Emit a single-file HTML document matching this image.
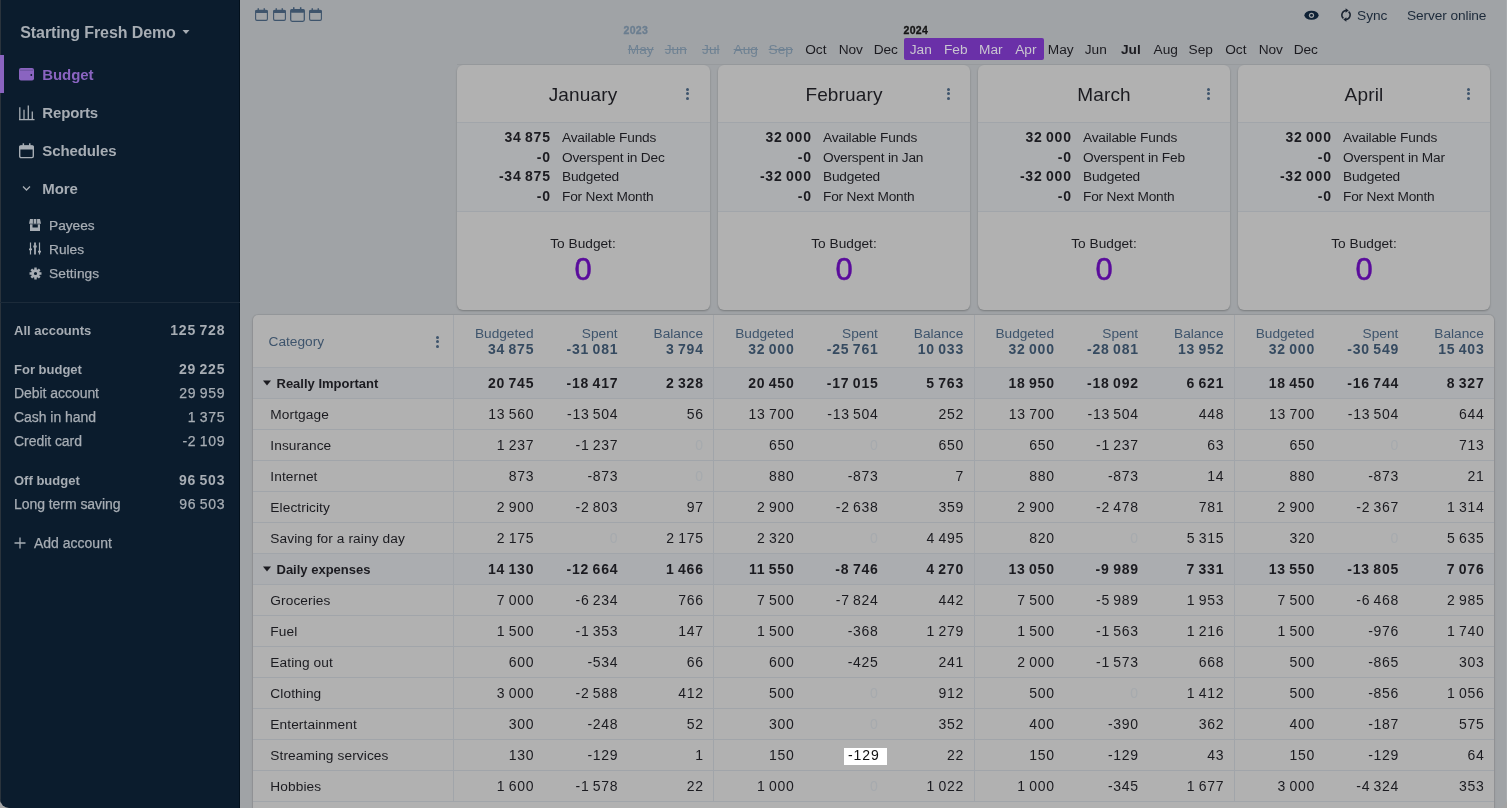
<!DOCTYPE html>
<html><head><meta charset="utf-8"><style>
html,body{margin:0;padding:0;width:1507px;height:808px;overflow:hidden;background:#a3a3a3}
body{position:relative;font-family:"Liberation Sans",sans-serif}
.t{position:absolute;line-height:0;white-space:nowrap}
.b{position:absolute}
#win{position:absolute;left:0;top:0;width:1507px;height:808px;overflow:hidden;border-radius:0 0 9px 9px;will-change:transform}
</style></head><body><div id="win">
<div class="b" style="left:0px;top:0px;width:240px;height:808px;background:#0b1c2d;"></div>
<div class="b" style="left:0px;top:0px;width:1px;height:808px;background:#2a333c;"></div>
<div class="b" style="left:239px;top:0px;width:1px;height:808px;background:#02101c;"></div>
<div class="t" style="top:33px;font-size:16px;color:#a7adb4;font-weight:700;letter-spacing:-0.1px;left:20.3px;">Starting Fresh Demo</div>
<svg class="b" style="left:182px;top:29px" width="8" height="6" viewBox="0 0 8 6"><path d="M0.5 1 L7.5 1 L4 5 Z" fill="#a7adb4"/></svg>
<div class="b" style="left:0px;top:55px;width:4px;height:38px;background:#8a64c0;"></div>
<svg class="b" style="left:19px;top:68px" width="15" height="13" viewBox="0 0 15 13"><rect x="0" y="0" width="15" height="12.6" rx="2" fill="#8a64c0"/><path d="M0.8 2.2 H14.2" stroke="#0b1c2d" stroke-width="0.5" opacity="0.5"/><circle cx="12.3" cy="7" r="0.9" fill="#0b1c2d"/></svg>
<div class="t" style="top:74.5px;font-size:15px;color:#8a64c0;font-weight:700;letter-spacing:-0.1px;left:42.3px;">Budget</div>
<svg class="b" style="left:19px;top:104px" width="16" height="17" viewBox="0 0 16 17" fill="none" stroke="#a7adb4" stroke-width="1.3"><path d="M0 15.6 H15.5"/><path d="M0.8 15.6 V3.2"/><path d="M5 15.6 V5.7"/><path d="M9.3 15.6 V1.4"/><path d="M13.3 15.6 V7.6"/></svg>
<div class="t" style="top:113px;font-size:15px;color:#a7adb4;font-weight:700;letter-spacing:-0.15px;left:42.3px;">Reports</div>
<svg class="b" style="left:19px;top:142.5px" width="15" height="16" viewBox="0 0 15 16"><rect x="0.7" y="2.9" width="13.6" height="11.7" rx="1.4" fill="none" stroke="#a7adb4" stroke-width="1.4"/><rect x="0.3" y="2.4" width="14.4" height="4.2" rx="1.2" fill="#a7adb4"/><rect x="3.6" y="0.3" width="1.5" height="3.5" fill="#a7adb4"/><rect x="10" y="0.3" width="1.5" height="3.5" fill="#a7adb4"/></svg>
<div class="t" style="top:151px;font-size:15px;color:#a7adb4;font-weight:700;letter-spacing:-0.1px;left:42.3px;">Schedules</div>
<svg class="b" style="left:22px;top:185px" width="9" height="7" viewBox="0 0 9 7" fill="none" stroke="#a7adb4" stroke-width="1.3"><path d="M1 1.5 L4.5 5 L8 1.5"/></svg>
<div class="t" style="top:189px;font-size:15px;color:#a7adb4;font-weight:700;letter-spacing:-0.1px;left:42.3px;">More</div>
<svg class="b" style="left:29px;top:219px" width="12" height="12" viewBox="0 0 12 12"><path d="M1 0 H11 L12 4.8 H0 Z" fill="#a7adb4"/><path d="M4.4 0 V4.8 M7.6 0 V4.8" stroke="#0b1c2d" stroke-width="0.7"/><rect x="1" y="5.3" width="10" height="6.7" fill="#a7adb4"/><rect x="3.5" y="5.3" width="5.3" height="3.2" fill="#0b1c2d"/></svg>
<div class="t" style="top:226px;font-size:13.7px;color:#a7adb4;left:49px;-webkit-text-stroke:0.25px #a7adb4;">Payees</div>
<svg class="b" style="left:29px;top:242px" width="12" height="13" viewBox="0 0 12 13" fill="none" stroke="#a7adb4"><path d="M1.5 0.5 V12.5 M10.5 0.5 V12.5" stroke-width="1.2"/><path d="M6 0.5 V12.5" stroke-width="1.8"/><path d="M0 7.3 H3 M4.3 4.5 H7.7 M9 9.6 H12" stroke-width="1.8"/></svg>
<div class="t" style="top:250px;font-size:13.7px;color:#a7adb4;left:49px;-webkit-text-stroke:0.25px #a7adb4;">Rules</div>
<svg class="b" style="left:28.5px;top:266.6px" width="13" height="13" viewBox="0 0 13 13"><path fill="#a7adb4" fill-rule="evenodd" d="M4.85 2.53 L5.23 2.39 L5.29 0.52 L7.71 0.52 L7.77 2.39 L8.15 2.53 L8.51 2.70 L9.87 1.42 L11.58 3.13 L10.30 4.49 L10.47 4.85 L10.61 5.23 L12.48 5.29 L12.48 7.71 L10.61 7.77 L10.47 8.15 L10.30 8.51 L11.58 9.87 L9.87 11.58 L8.51 10.30 L8.15 10.47 L7.77 10.61 L7.71 12.48 L5.29 12.48 L5.23 10.61 L4.85 10.47 L4.49 10.30 L3.13 11.58 L1.42 9.87 L2.70 8.51 L2.53 8.15 L2.39 7.77 L0.52 7.71 L0.52 5.29 L2.39 5.23 L2.53 4.85 L2.70 4.49 L1.42 3.13 L3.13 1.42 L4.49 2.70 Z M6.5 4.9 A1.6 1.6 0 1 0 6.5 8.1 A1.6 1.6 0 1 0 6.5 4.9 Z"/></svg>
<div class="t" style="top:274px;font-size:13.7px;color:#a7adb4;letter-spacing:0.1px;left:49px;-webkit-text-stroke:0.25px #a7adb4;">Settings</div>
<div class="b" style="left:0px;top:302px;width:240px;height:1px;background:#1c2b3a;"></div>
<div class="t" style="top:331px;font-size:13px;color:#a7adb4;font-weight:700;left:14px;">All accounts</div>
<div class="t" style="top:330px;font-size:14px;color:#a7adb4;font-weight:700;letter-spacing:0.8px;left:-375.5px;width:600px;text-align:right;margin-left:0.8px;word-spacing:-1.2px;">125 728</div>
<div class="t" style="top:370px;font-size:13px;color:#a7adb4;font-weight:700;left:14px;">For budget</div>
<div class="t" style="top:369px;font-size:14px;color:#a7adb4;font-weight:700;letter-spacing:0.8px;left:-375.5px;width:600px;text-align:right;margin-left:0.8px;word-spacing:-1.2px;">29 225</div>
<div class="t" style="top:393px;font-size:14px;color:#a7adb4;letter-spacing:-0.05px;left:14px;-webkit-text-stroke:0.25px #a7adb4;">Debit account</div>
<div class="t" style="top:393px;font-size:14px;color:#a7adb4;letter-spacing:0.7px;left:-375.5px;width:600px;text-align:right;margin-left:0.7px;word-spacing:-1.2px;-webkit-text-stroke:0.25px #a7adb4;">29 959</div>
<div class="t" style="top:417px;font-size:14px;color:#a7adb4;letter-spacing:-0.05px;left:14px;-webkit-text-stroke:0.25px #a7adb4;">Cash in hand</div>
<div class="t" style="top:417px;font-size:14px;color:#a7adb4;letter-spacing:0.7px;left:-375.5px;width:600px;text-align:right;margin-left:0.7px;word-spacing:-1.2px;-webkit-text-stroke:0.25px #a7adb4;">1 375</div>
<div class="t" style="top:441px;font-size:14px;color:#a7adb4;letter-spacing:-0.05px;left:14px;-webkit-text-stroke:0.25px #a7adb4;">Credit card</div>
<div class="t" style="top:441px;font-size:14px;color:#a7adb4;letter-spacing:0.7px;left:-375.5px;width:600px;text-align:right;margin-left:0.7px;word-spacing:-1.2px;-webkit-text-stroke:0.25px #a7adb4;">-2 109</div>
<div class="t" style="top:481px;font-size:13px;color:#a7adb4;font-weight:700;left:14px;">Off budget</div>
<div class="t" style="top:480px;font-size:14px;color:#a7adb4;font-weight:700;letter-spacing:0.8px;left:-375.5px;width:600px;text-align:right;margin-left:0.8px;word-spacing:-1.2px;">96 503</div>
<div class="t" style="top:504px;font-size:14px;color:#a7adb4;letter-spacing:-0.05px;left:14px;-webkit-text-stroke:0.25px #a7adb4;">Long term saving</div>
<div class="t" style="top:504px;font-size:14px;color:#a7adb4;letter-spacing:0.7px;left:-375.5px;width:600px;text-align:right;margin-left:0.7px;word-spacing:-1.2px;-webkit-text-stroke:0.25px #a7adb4;">96 503</div>
<svg class="b" style="left:14px;top:537px" width="12" height="12" viewBox="0 0 12 12" fill="none" stroke="#a7adb4" stroke-width="1.3"><path d="M6 0.5 V11.5 M0.5 6 H11.5"/></svg>
<div class="t" style="top:543px;font-size:14px;color:#a7adb4;left:34px;-webkit-text-stroke:0.25px #a7adb4;">Add account</div>
<div class="b" style="left:240px;top:0px;width:1267px;height:808px;background:#a0a3a6;"></div>
<svg class="b" style="left:255px;top:8px" width="13" height="13" viewBox="0 0 13 13" preserveAspectRatio="none"><rect x="0.6" y="2.3" width="11.8" height="10.1" rx="1.3" fill="none" stroke="#3e546c" stroke-width="1.1"/><rect x="0.4" y="2" width="12.2" height="2.9" rx="1" fill="#3e546c"/><rect x="2.6" y="0.2" width="1.3" height="3" fill="#3e546c"/><rect x="8.6" y="0.2" width="1.3" height="3" fill="#3e546c"/></svg>
<svg class="b" style="left:273px;top:8px" width="13" height="13" viewBox="0 0 13 13" preserveAspectRatio="none"><rect x="0.6" y="2.3" width="11.8" height="10.1" rx="1.3" fill="none" stroke="#3e546c" stroke-width="1.1"/><rect x="0.4" y="2" width="12.2" height="2.9" rx="1" fill="#3e546c"/><rect x="2.6" y="0.2" width="1.3" height="3" fill="#3e546c"/><rect x="8.6" y="0.2" width="1.3" height="3" fill="#3e546c"/></svg>
<svg class="b" style="left:290px;top:7px" width="15" height="15" viewBox="0 0 13 13" preserveAspectRatio="none"><rect x="0.6" y="2.3" width="11.8" height="10.1" rx="1.3" fill="none" stroke="#3e546c" stroke-width="1.1"/><rect x="0.4" y="2" width="12.2" height="2.9" rx="1" fill="#3e546c"/><rect x="2.6" y="0.2" width="1.3" height="3" fill="#3e546c"/><rect x="8.6" y="0.2" width="1.3" height="3" fill="#3e546c"/></svg>
<svg class="b" style="left:309px;top:8px" width="13" height="13" viewBox="0 0 13 13" preserveAspectRatio="none"><rect x="0.6" y="2.3" width="11.8" height="10.1" rx="1.3" fill="none" stroke="#3e546c" stroke-width="1.1"/><rect x="0.4" y="2" width="12.2" height="2.9" rx="1" fill="#3e546c"/><rect x="2.6" y="0.2" width="1.3" height="3" fill="#3e546c"/><rect x="8.6" y="0.2" width="1.3" height="3" fill="#3e546c"/></svg>
<div class="b" style="left:904px;top:38px;width:140px;height:22px;background:#6a30a8;border-radius:2px;"></div>
<div class="t" style="top:30px;font-size:10.5px;color:#6b7e90;font-weight:700;letter-spacing:0.3px;left:623.5px;-webkit-text-stroke:0.3px #6b7e90;">2023</div>
<div class="t" style="top:30px;font-size:10.5px;color:#151515;font-weight:700;letter-spacing:0.3px;left:903.5px;-webkit-text-stroke:0.3px #151515;">2024</div>
<div class="t" style="top:50px;font-size:13.7px;color:#6f8293;left:340.79999999999995px;width:600px;text-align:center;text-decoration:line-through;">May</div>
<div class="t" style="top:50px;font-size:13.7px;color:#6f8293;left:375.79999999999995px;width:600px;text-align:center;text-decoration:line-through;">Jun</div>
<div class="t" style="top:50px;font-size:13.7px;color:#6f8293;left:410.79999999999995px;width:600px;text-align:center;text-decoration:line-through;">Jul</div>
<div class="t" style="top:50px;font-size:13.7px;color:#6f8293;left:445.79999999999995px;width:600px;text-align:center;text-decoration:line-through;">Aug</div>
<div class="t" style="top:50px;font-size:13.7px;color:#6f8293;left:480.79999999999995px;width:600px;text-align:center;text-decoration:line-through;">Sep</div>
<div class="t" style="top:50px;font-size:13.7px;color:#1b1b20;left:515.8px;width:600px;text-align:center;">Oct</div>
<div class="t" style="top:50px;font-size:13.7px;color:#1b1b20;left:550.8px;width:600px;text-align:center;">Nov</div>
<div class="t" style="top:50px;font-size:13.7px;color:#1b1b20;left:585.8px;width:600px;text-align:center;">Dec</div>
<div class="t" style="top:50px;font-size:13.7px;color:#c9c5d0;left:620.8px;width:600px;text-align:center;">Jan</div>
<div class="t" style="top:50px;font-size:13.7px;color:#c9c5d0;left:655.8px;width:600px;text-align:center;">Feb</div>
<div class="t" style="top:50px;font-size:13.7px;color:#c9c5d0;left:690.8px;width:600px;text-align:center;">Mar</div>
<div class="t" style="top:50px;font-size:13.7px;color:#c9c5d0;left:725.8px;width:600px;text-align:center;">Apr</div>
<div class="t" style="top:50px;font-size:13.7px;color:#1b1b20;left:760.8px;width:600px;text-align:center;">May</div>
<div class="t" style="top:50px;font-size:13.7px;color:#1b1b20;left:795.8px;width:600px;text-align:center;">Jun</div>
<div class="t" style="top:50px;font-size:13.7px;color:#1b1b20;font-weight:700;left:830.8px;width:600px;text-align:center;">Jul</div>
<div class="t" style="top:50px;font-size:13.7px;color:#1b1b20;left:865.8px;width:600px;text-align:center;">Aug</div>
<div class="t" style="top:50px;font-size:13.7px;color:#1b1b20;left:900.8px;width:600px;text-align:center;">Sep</div>
<div class="t" style="top:50px;font-size:13.7px;color:#1b1b20;left:935.8px;width:600px;text-align:center;">Oct</div>
<div class="t" style="top:50px;font-size:13.7px;color:#1b1b20;left:970.8px;width:600px;text-align:center;">Nov</div>
<div class="t" style="top:50px;font-size:13.7px;color:#1b1b20;left:1005.8px;width:600px;text-align:center;">Dec</div>
<svg class="b" style="left:1304px;top:10px" width="15" height="11" viewBox="0 0 15 11"><ellipse cx="7.5" cy="5.3" rx="7.1" ry="4.5" fill="#0f2236"/><circle cx="7.5" cy="5.3" r="2.6" fill="#a0a3a6"/><circle cx="7.5" cy="5.3" r="1.4" fill="#0f2236"/></svg>
<svg class="b" style="left:1340px;top:8px" width="12" height="14" viewBox="0 0 12 14" fill="none" stroke="#1a2330" stroke-width="1.5"><path d="M6.2 2.5 A4.5 4.5 0 0 0 3.4 10.4"/><path d="M8.6 3.6 A4.5 4.5 0 0 1 5.8 11.5"/><path d="M5.6 0.2 L8.7 2.5 L5.6 4.8 Z" fill="#1a2330" stroke="none"/><path d="M6.4 9.2 L3.3 11.5 L6.4 13.8 Z" fill="#1a2330" stroke="none"/></svg>
<div class="t" style="top:16px;font-size:13.7px;color:#1c2a3a;left:1357px;">Sync</div>
<div class="t" style="top:16px;font-size:13.7px;color:#1c2a3a;letter-spacing:-0.1px;left:1407px;">Server online</div>
<div class="b" style="left:457px;top:65px;width:253px;height:245px;background:#b1b1b1;border-radius:6px;box-shadow:0 1px 2px rgba(0,0,0,0.25);overflow:hidden"><div class="b" style="left:0;top:57px;width:253px;height:1px;background:#a1a5aa"></div><div class="b" style="left:0;top:58px;width:253px;height:88px;background:#acaeb0"></div><div class="b" style="left:0;top:146px;width:253px;height:1px;background:#a1a5aa"></div></div>
<div class="t" style="top:95px;font-size:19px;color:#1b1b20;letter-spacing:0.15px;left:283px;width:600px;text-align:center;">January</div>
<div class="b" style="left:686px;top:88.0px;width:3px;height:3px;border-radius:50%;background:#3e546c"></div>
<div class="b" style="left:686px;top:92.3px;width:3px;height:3px;border-radius:50%;background:#3e546c"></div>
<div class="b" style="left:686px;top:96.6px;width:3px;height:3px;border-radius:50%;background:#3e546c"></div>
<div class="t" style="top:137px;font-size:14px;color:#1b1b20;font-weight:700;letter-spacing:0.8px;left:-50px;width:600px;text-align:right;margin-left:0.8px;word-spacing:-1.2px;">34 875</div>
<div class="t" style="top:138px;font-size:13.7px;color:#1b1b20;letter-spacing:-0.2px;left:562px;">Available Funds</div>
<div class="t" style="top:157px;font-size:14px;color:#1b1b20;font-weight:700;letter-spacing:0.8px;left:-50px;width:600px;text-align:right;margin-left:0.8px;word-spacing:-1.2px;">-0</div>
<div class="t" style="top:158px;font-size:13.7px;color:#1b1b20;letter-spacing:-0.2px;left:562px;">Overspent in Dec</div>
<div class="t" style="top:176px;font-size:14px;color:#1b1b20;font-weight:700;letter-spacing:0.8px;left:-50px;width:600px;text-align:right;margin-left:0.8px;word-spacing:-1.2px;">-34 875</div>
<div class="t" style="top:177px;font-size:13.7px;color:#1b1b20;letter-spacing:-0.2px;left:562px;">Budgeted</div>
<div class="t" style="top:196px;font-size:14px;color:#1b1b20;font-weight:700;letter-spacing:0.8px;left:-50px;width:600px;text-align:right;margin-left:0.8px;word-spacing:-1.2px;">-0</div>
<div class="t" style="top:197px;font-size:13.7px;color:#1b1b20;letter-spacing:-0.2px;left:562px;">For Next Month</div>
<div class="t" style="top:244px;font-size:13.7px;color:#1b1b20;left:283px;width:600px;text-align:center;">To Budget:</div>
<div class="t" style="top:270px;font-size:31px;color:#5a0c9c;left:283px;width:600px;text-align:center;-webkit-text-stroke:0.5px #5a0c9c;">0</div>
<div class="b" style="left:718px;top:65px;width:252px;height:245px;background:#b1b1b1;border-radius:6px;box-shadow:0 1px 2px rgba(0,0,0,0.25);overflow:hidden"><div class="b" style="left:0;top:57px;width:253px;height:1px;background:#a1a5aa"></div><div class="b" style="left:0;top:58px;width:253px;height:88px;background:#acaeb0"></div><div class="b" style="left:0;top:146px;width:253px;height:1px;background:#a1a5aa"></div></div>
<div class="t" style="top:95px;font-size:19px;color:#1b1b20;letter-spacing:0.15px;left:544px;width:600px;text-align:center;">February</div>
<div class="b" style="left:947px;top:88.0px;width:3px;height:3px;border-radius:50%;background:#3e546c"></div>
<div class="b" style="left:947px;top:92.3px;width:3px;height:3px;border-radius:50%;background:#3e546c"></div>
<div class="b" style="left:947px;top:96.6px;width:3px;height:3px;border-radius:50%;background:#3e546c"></div>
<div class="t" style="top:137px;font-size:14px;color:#1b1b20;font-weight:700;letter-spacing:0.8px;left:211px;width:600px;text-align:right;margin-left:0.8px;word-spacing:-1.2px;">32 000</div>
<div class="t" style="top:138px;font-size:13.7px;color:#1b1b20;letter-spacing:-0.2px;left:823px;">Available Funds</div>
<div class="t" style="top:157px;font-size:14px;color:#1b1b20;font-weight:700;letter-spacing:0.8px;left:211px;width:600px;text-align:right;margin-left:0.8px;word-spacing:-1.2px;">-0</div>
<div class="t" style="top:158px;font-size:13.7px;color:#1b1b20;letter-spacing:-0.2px;left:823px;">Overspent in Jan</div>
<div class="t" style="top:176px;font-size:14px;color:#1b1b20;font-weight:700;letter-spacing:0.8px;left:211px;width:600px;text-align:right;margin-left:0.8px;word-spacing:-1.2px;">-32 000</div>
<div class="t" style="top:177px;font-size:13.7px;color:#1b1b20;letter-spacing:-0.2px;left:823px;">Budgeted</div>
<div class="t" style="top:196px;font-size:14px;color:#1b1b20;font-weight:700;letter-spacing:0.8px;left:211px;width:600px;text-align:right;margin-left:0.8px;word-spacing:-1.2px;">-0</div>
<div class="t" style="top:197px;font-size:13.7px;color:#1b1b20;letter-spacing:-0.2px;left:823px;">For Next Month</div>
<div class="t" style="top:244px;font-size:13.7px;color:#1b1b20;left:544px;width:600px;text-align:center;">To Budget:</div>
<div class="t" style="top:270px;font-size:31px;color:#5a0c9c;left:544px;width:600px;text-align:center;-webkit-text-stroke:0.5px #5a0c9c;">0</div>
<div class="b" style="left:978px;top:65px;width:252px;height:245px;background:#b1b1b1;border-radius:6px;box-shadow:0 1px 2px rgba(0,0,0,0.25);overflow:hidden"><div class="b" style="left:0;top:57px;width:253px;height:1px;background:#a1a5aa"></div><div class="b" style="left:0;top:58px;width:253px;height:88px;background:#acaeb0"></div><div class="b" style="left:0;top:146px;width:253px;height:1px;background:#a1a5aa"></div></div>
<div class="t" style="top:95px;font-size:19px;color:#1b1b20;letter-spacing:0.15px;left:804px;width:600px;text-align:center;">March</div>
<div class="b" style="left:1207px;top:88.0px;width:3px;height:3px;border-radius:50%;background:#3e546c"></div>
<div class="b" style="left:1207px;top:92.3px;width:3px;height:3px;border-radius:50%;background:#3e546c"></div>
<div class="b" style="left:1207px;top:96.6px;width:3px;height:3px;border-radius:50%;background:#3e546c"></div>
<div class="t" style="top:137px;font-size:14px;color:#1b1b20;font-weight:700;letter-spacing:0.8px;left:471px;width:600px;text-align:right;margin-left:0.8px;word-spacing:-1.2px;">32 000</div>
<div class="t" style="top:138px;font-size:13.7px;color:#1b1b20;letter-spacing:-0.2px;left:1083px;">Available Funds</div>
<div class="t" style="top:157px;font-size:14px;color:#1b1b20;font-weight:700;letter-spacing:0.8px;left:471px;width:600px;text-align:right;margin-left:0.8px;word-spacing:-1.2px;">-0</div>
<div class="t" style="top:158px;font-size:13.7px;color:#1b1b20;letter-spacing:-0.2px;left:1083px;">Overspent in Feb</div>
<div class="t" style="top:176px;font-size:14px;color:#1b1b20;font-weight:700;letter-spacing:0.8px;left:471px;width:600px;text-align:right;margin-left:0.8px;word-spacing:-1.2px;">-32 000</div>
<div class="t" style="top:177px;font-size:13.7px;color:#1b1b20;letter-spacing:-0.2px;left:1083px;">Budgeted</div>
<div class="t" style="top:196px;font-size:14px;color:#1b1b20;font-weight:700;letter-spacing:0.8px;left:471px;width:600px;text-align:right;margin-left:0.8px;word-spacing:-1.2px;">-0</div>
<div class="t" style="top:197px;font-size:13.7px;color:#1b1b20;letter-spacing:-0.2px;left:1083px;">For Next Month</div>
<div class="t" style="top:244px;font-size:13.7px;color:#1b1b20;left:804px;width:600px;text-align:center;">To Budget:</div>
<div class="t" style="top:270px;font-size:31px;color:#5a0c9c;left:804px;width:600px;text-align:center;-webkit-text-stroke:0.5px #5a0c9c;">0</div>
<div class="b" style="left:1238px;top:65px;width:252px;height:245px;background:#b1b1b1;border-radius:6px;box-shadow:0 1px 2px rgba(0,0,0,0.25);overflow:hidden"><div class="b" style="left:0;top:57px;width:253px;height:1px;background:#a1a5aa"></div><div class="b" style="left:0;top:58px;width:253px;height:88px;background:#acaeb0"></div><div class="b" style="left:0;top:146px;width:253px;height:1px;background:#a1a5aa"></div></div>
<div class="t" style="top:95px;font-size:19px;color:#1b1b20;letter-spacing:0.15px;left:1064px;width:600px;text-align:center;">April</div>
<div class="b" style="left:1467px;top:88.0px;width:3px;height:3px;border-radius:50%;background:#3e546c"></div>
<div class="b" style="left:1467px;top:92.3px;width:3px;height:3px;border-radius:50%;background:#3e546c"></div>
<div class="b" style="left:1467px;top:96.6px;width:3px;height:3px;border-radius:50%;background:#3e546c"></div>
<div class="t" style="top:137px;font-size:14px;color:#1b1b20;font-weight:700;letter-spacing:0.8px;left:731px;width:600px;text-align:right;margin-left:0.8px;word-spacing:-1.2px;">32 000</div>
<div class="t" style="top:138px;font-size:13.7px;color:#1b1b20;letter-spacing:-0.2px;left:1343px;">Available Funds</div>
<div class="t" style="top:157px;font-size:14px;color:#1b1b20;font-weight:700;letter-spacing:0.8px;left:731px;width:600px;text-align:right;margin-left:0.8px;word-spacing:-1.2px;">-0</div>
<div class="t" style="top:158px;font-size:13.7px;color:#1b1b20;letter-spacing:-0.2px;left:1343px;">Overspent in Mar</div>
<div class="t" style="top:176px;font-size:14px;color:#1b1b20;font-weight:700;letter-spacing:0.8px;left:731px;width:600px;text-align:right;margin-left:0.8px;word-spacing:-1.2px;">-32 000</div>
<div class="t" style="top:177px;font-size:13.7px;color:#1b1b20;letter-spacing:-0.2px;left:1343px;">Budgeted</div>
<div class="t" style="top:196px;font-size:14px;color:#1b1b20;font-weight:700;letter-spacing:0.8px;left:731px;width:600px;text-align:right;margin-left:0.8px;word-spacing:-1.2px;">-0</div>
<div class="t" style="top:197px;font-size:13.7px;color:#1b1b20;letter-spacing:-0.2px;left:1343px;">For Next Month</div>
<div class="t" style="top:244px;font-size:13.7px;color:#1b1b20;left:1064px;width:600px;text-align:center;">To Budget:</div>
<div class="t" style="top:270px;font-size:31px;color:#5a0c9c;left:1064px;width:600px;text-align:center;-webkit-text-stroke:0.5px #5a0c9c;">0</div>
<div class="b" style="left:457px;top:64px;width:1033px;height:1px;background:rgba(0,0,0,0.05);"></div>
<div class="b" style="left:1506px;top:0px;width:1px;height:808px;background:rgba(255,255,255,0.09);"></div>
<div class="b" style="left:253px;top:315px;width:1241px;height:500px;background:#b1b1b1;border-radius:5px 5px 0 0;box-shadow:0 0 0 1px rgba(0,0,0,0.06),0 1px 3px rgba(0,0,0,0.12)">
</div>
<div class="b" style="left:253px;top:367px;width:1241px;height:1px;background:#a1a5aa;"></div>
<div class="t" style="top:342px;font-size:13.7px;color:#3e546c;left:268.5px;">Category</div>
<div class="b" style="left:436px;top:336.0px;width:3px;height:3px;border-radius:50%;background:#3e546c"></div>
<div class="b" style="left:436px;top:340.3px;width:3px;height:3px;border-radius:50%;background:#3e546c"></div>
<div class="b" style="left:436px;top:344.6px;width:3px;height:3px;border-radius:50%;background:#3e546c"></div>
<div class="b" style="left:253px;top:368px;width:1241px;height:30px;background:#abadb0;"></div>
<div class="b" style="left:253px;top:398px;width:1241px;height:1px;background:#a1a5aa;"></div>
<svg class="b" style="left:263px;top:380px" width="8" height="6" viewBox="0 0 8 6"><path d="M0 0.5 H8 L4 5.5 Z" fill="#1b1b20"/></svg>
<div class="t" style="top:384px;font-size:13px;color:#1b1b20;font-weight:700;left:276.5px;">Really Important</div>
<div class="t" style="top:383px;font-size:14px;color:#1b1b20;font-weight:700;letter-spacing:0.8px;left:-66.5px;width:600px;text-align:right;margin-left:0.8px;word-spacing:-1.2px;">20 745</div>
<div class="t" style="top:383px;font-size:14px;color:#1b1b20;font-weight:700;letter-spacing:0.8px;left:17.600000000000023px;width:600px;text-align:right;margin-left:0.8px;word-spacing:-1.2px;">-18 417</div>
<div class="t" style="top:383px;font-size:14px;color:#1b1b20;font-weight:700;letter-spacing:0.8px;left:103.0px;width:600px;text-align:right;margin-left:0.8px;word-spacing:-1.2px;">2 328</div>
<div class="t" style="top:383px;font-size:14px;color:#1b1b20;font-weight:700;letter-spacing:0.8px;left:193.75px;width:600px;text-align:right;margin-left:0.8px;word-spacing:-1.2px;">20 450</div>
<div class="t" style="top:383px;font-size:14px;color:#1b1b20;font-weight:700;letter-spacing:0.8px;left:277.85px;width:600px;text-align:right;margin-left:0.8px;word-spacing:-1.2px;">-17 015</div>
<div class="t" style="top:383px;font-size:14px;color:#1b1b20;font-weight:700;letter-spacing:0.8px;left:363.25px;width:600px;text-align:right;margin-left:0.8px;word-spacing:-1.2px;">5 763</div>
<div class="t" style="top:383px;font-size:14px;color:#1b1b20;font-weight:700;letter-spacing:0.8px;left:454.0px;width:600px;text-align:right;margin-left:0.8px;word-spacing:-1.2px;">18 950</div>
<div class="t" style="top:383px;font-size:14px;color:#1b1b20;font-weight:700;letter-spacing:0.8px;left:538.0999999999999px;width:600px;text-align:right;margin-left:0.8px;word-spacing:-1.2px;">-18 092</div>
<div class="t" style="top:383px;font-size:14px;color:#1b1b20;font-weight:700;letter-spacing:0.8px;left:623.5px;width:600px;text-align:right;margin-left:0.8px;word-spacing:-1.2px;">6 621</div>
<div class="t" style="top:383px;font-size:14px;color:#1b1b20;font-weight:700;letter-spacing:0.8px;left:714.25px;width:600px;text-align:right;margin-left:0.8px;word-spacing:-1.2px;">18 450</div>
<div class="t" style="top:383px;font-size:14px;color:#1b1b20;font-weight:700;letter-spacing:0.8px;left:798.3499999999999px;width:600px;text-align:right;margin-left:0.8px;word-spacing:-1.2px;">-16 744</div>
<div class="t" style="top:383px;font-size:14px;color:#1b1b20;font-weight:700;letter-spacing:0.8px;left:883.75px;width:600px;text-align:right;margin-left:0.8px;word-spacing:-1.2px;">8 327</div>
<div class="b" style="left:253px;top:429px;width:1241px;height:1px;background:#a1a5aa;"></div>
<div class="t" style="top:415px;font-size:13.7px;color:#1b1b20;letter-spacing:0.1px;left:270.3px;">Mortgage</div>
<div class="t" style="top:414px;font-size:14px;color:#1b1b20;letter-spacing:0.7px;left:-66.5px;width:600px;text-align:right;margin-left:0.7px;word-spacing:-1.2px;">13 560</div>
<div class="t" style="top:414px;font-size:14px;color:#1b1b20;letter-spacing:0.7px;left:17.600000000000023px;width:600px;text-align:right;margin-left:0.7px;word-spacing:-1.2px;">-13 504</div>
<div class="t" style="top:414px;font-size:14px;color:#1b1b20;letter-spacing:0.7px;left:103.0px;width:600px;text-align:right;margin-left:0.7px;word-spacing:-1.2px;">56</div>
<div class="t" style="top:414px;font-size:14px;color:#1b1b20;letter-spacing:0.7px;left:193.75px;width:600px;text-align:right;margin-left:0.7px;word-spacing:-1.2px;">13 700</div>
<div class="t" style="top:414px;font-size:14px;color:#1b1b20;letter-spacing:0.7px;left:277.85px;width:600px;text-align:right;margin-left:0.7px;word-spacing:-1.2px;">-13 504</div>
<div class="t" style="top:414px;font-size:14px;color:#1b1b20;letter-spacing:0.7px;left:363.25px;width:600px;text-align:right;margin-left:0.7px;word-spacing:-1.2px;">252</div>
<div class="t" style="top:414px;font-size:14px;color:#1b1b20;letter-spacing:0.7px;left:454.0px;width:600px;text-align:right;margin-left:0.7px;word-spacing:-1.2px;">13 700</div>
<div class="t" style="top:414px;font-size:14px;color:#1b1b20;letter-spacing:0.7px;left:538.0999999999999px;width:600px;text-align:right;margin-left:0.7px;word-spacing:-1.2px;">-13 504</div>
<div class="t" style="top:414px;font-size:14px;color:#1b1b20;letter-spacing:0.7px;left:623.5px;width:600px;text-align:right;margin-left:0.7px;word-spacing:-1.2px;">448</div>
<div class="t" style="top:414px;font-size:14px;color:#1b1b20;letter-spacing:0.7px;left:714.25px;width:600px;text-align:right;margin-left:0.7px;word-spacing:-1.2px;">13 700</div>
<div class="t" style="top:414px;font-size:14px;color:#1b1b20;letter-spacing:0.7px;left:798.3499999999999px;width:600px;text-align:right;margin-left:0.7px;word-spacing:-1.2px;">-13 504</div>
<div class="t" style="top:414px;font-size:14px;color:#1b1b20;letter-spacing:0.7px;left:883.75px;width:600px;text-align:right;margin-left:0.7px;word-spacing:-1.2px;">644</div>
<div class="b" style="left:253px;top:460px;width:1241px;height:1px;background:#a1a5aa;"></div>
<div class="t" style="top:446px;font-size:13.7px;color:#1b1b20;letter-spacing:0.1px;left:270.3px;">Insurance</div>
<div class="t" style="top:445px;font-size:14px;color:#1b1b20;letter-spacing:0.7px;left:-66.5px;width:600px;text-align:right;margin-left:0.7px;word-spacing:-1.2px;">1 237</div>
<div class="t" style="top:445px;font-size:14px;color:#1b1b20;letter-spacing:0.7px;left:17.600000000000023px;width:600px;text-align:right;margin-left:0.7px;word-spacing:-1.2px;">-1 237</div>
<div class="t" style="top:445px;font-size:14px;color:#a6aaae;letter-spacing:0.7px;left:103.0px;width:600px;text-align:right;margin-left:0.7px;word-spacing:-1.2px;">0</div>
<div class="t" style="top:445px;font-size:14px;color:#1b1b20;letter-spacing:0.7px;left:193.75px;width:600px;text-align:right;margin-left:0.7px;word-spacing:-1.2px;">650</div>
<div class="t" style="top:445px;font-size:14px;color:#a6aaae;letter-spacing:0.7px;left:277.85px;width:600px;text-align:right;margin-left:0.7px;word-spacing:-1.2px;">0</div>
<div class="t" style="top:445px;font-size:14px;color:#1b1b20;letter-spacing:0.7px;left:363.25px;width:600px;text-align:right;margin-left:0.7px;word-spacing:-1.2px;">650</div>
<div class="t" style="top:445px;font-size:14px;color:#1b1b20;letter-spacing:0.7px;left:454.0px;width:600px;text-align:right;margin-left:0.7px;word-spacing:-1.2px;">650</div>
<div class="t" style="top:445px;font-size:14px;color:#1b1b20;letter-spacing:0.7px;left:538.0999999999999px;width:600px;text-align:right;margin-left:0.7px;word-spacing:-1.2px;">-1 237</div>
<div class="t" style="top:445px;font-size:14px;color:#1b1b20;letter-spacing:0.7px;left:623.5px;width:600px;text-align:right;margin-left:0.7px;word-spacing:-1.2px;">63</div>
<div class="t" style="top:445px;font-size:14px;color:#1b1b20;letter-spacing:0.7px;left:714.25px;width:600px;text-align:right;margin-left:0.7px;word-spacing:-1.2px;">650</div>
<div class="t" style="top:445px;font-size:14px;color:#a6aaae;letter-spacing:0.7px;left:798.3499999999999px;width:600px;text-align:right;margin-left:0.7px;word-spacing:-1.2px;">0</div>
<div class="t" style="top:445px;font-size:14px;color:#1b1b20;letter-spacing:0.7px;left:883.75px;width:600px;text-align:right;margin-left:0.7px;word-spacing:-1.2px;">713</div>
<div class="b" style="left:253px;top:491px;width:1241px;height:1px;background:#a1a5aa;"></div>
<div class="t" style="top:477px;font-size:13.7px;color:#1b1b20;letter-spacing:0.1px;left:270.3px;">Internet</div>
<div class="t" style="top:476px;font-size:14px;color:#1b1b20;letter-spacing:0.7px;left:-66.5px;width:600px;text-align:right;margin-left:0.7px;word-spacing:-1.2px;">873</div>
<div class="t" style="top:476px;font-size:14px;color:#1b1b20;letter-spacing:0.7px;left:17.600000000000023px;width:600px;text-align:right;margin-left:0.7px;word-spacing:-1.2px;">-873</div>
<div class="t" style="top:476px;font-size:14px;color:#a6aaae;letter-spacing:0.7px;left:103.0px;width:600px;text-align:right;margin-left:0.7px;word-spacing:-1.2px;">0</div>
<div class="t" style="top:476px;font-size:14px;color:#1b1b20;letter-spacing:0.7px;left:193.75px;width:600px;text-align:right;margin-left:0.7px;word-spacing:-1.2px;">880</div>
<div class="t" style="top:476px;font-size:14px;color:#1b1b20;letter-spacing:0.7px;left:277.85px;width:600px;text-align:right;margin-left:0.7px;word-spacing:-1.2px;">-873</div>
<div class="t" style="top:476px;font-size:14px;color:#1b1b20;letter-spacing:0.7px;left:363.25px;width:600px;text-align:right;margin-left:0.7px;word-spacing:-1.2px;">7</div>
<div class="t" style="top:476px;font-size:14px;color:#1b1b20;letter-spacing:0.7px;left:454.0px;width:600px;text-align:right;margin-left:0.7px;word-spacing:-1.2px;">880</div>
<div class="t" style="top:476px;font-size:14px;color:#1b1b20;letter-spacing:0.7px;left:538.0999999999999px;width:600px;text-align:right;margin-left:0.7px;word-spacing:-1.2px;">-873</div>
<div class="t" style="top:476px;font-size:14px;color:#1b1b20;letter-spacing:0.7px;left:623.5px;width:600px;text-align:right;margin-left:0.7px;word-spacing:-1.2px;">14</div>
<div class="t" style="top:476px;font-size:14px;color:#1b1b20;letter-spacing:0.7px;left:714.25px;width:600px;text-align:right;margin-left:0.7px;word-spacing:-1.2px;">880</div>
<div class="t" style="top:476px;font-size:14px;color:#1b1b20;letter-spacing:0.7px;left:798.3499999999999px;width:600px;text-align:right;margin-left:0.7px;word-spacing:-1.2px;">-873</div>
<div class="t" style="top:476px;font-size:14px;color:#1b1b20;letter-spacing:0.7px;left:883.75px;width:600px;text-align:right;margin-left:0.7px;word-spacing:-1.2px;">21</div>
<div class="b" style="left:253px;top:522px;width:1241px;height:1px;background:#a1a5aa;"></div>
<div class="t" style="top:508px;font-size:13.7px;color:#1b1b20;letter-spacing:0.1px;left:270.3px;">Electricity</div>
<div class="t" style="top:507px;font-size:14px;color:#1b1b20;letter-spacing:0.7px;left:-66.5px;width:600px;text-align:right;margin-left:0.7px;word-spacing:-1.2px;">2 900</div>
<div class="t" style="top:507px;font-size:14px;color:#1b1b20;letter-spacing:0.7px;left:17.600000000000023px;width:600px;text-align:right;margin-left:0.7px;word-spacing:-1.2px;">-2 803</div>
<div class="t" style="top:507px;font-size:14px;color:#1b1b20;letter-spacing:0.7px;left:103.0px;width:600px;text-align:right;margin-left:0.7px;word-spacing:-1.2px;">97</div>
<div class="t" style="top:507px;font-size:14px;color:#1b1b20;letter-spacing:0.7px;left:193.75px;width:600px;text-align:right;margin-left:0.7px;word-spacing:-1.2px;">2 900</div>
<div class="t" style="top:507px;font-size:14px;color:#1b1b20;letter-spacing:0.7px;left:277.85px;width:600px;text-align:right;margin-left:0.7px;word-spacing:-1.2px;">-2 638</div>
<div class="t" style="top:507px;font-size:14px;color:#1b1b20;letter-spacing:0.7px;left:363.25px;width:600px;text-align:right;margin-left:0.7px;word-spacing:-1.2px;">359</div>
<div class="t" style="top:507px;font-size:14px;color:#1b1b20;letter-spacing:0.7px;left:454.0px;width:600px;text-align:right;margin-left:0.7px;word-spacing:-1.2px;">2 900</div>
<div class="t" style="top:507px;font-size:14px;color:#1b1b20;letter-spacing:0.7px;left:538.0999999999999px;width:600px;text-align:right;margin-left:0.7px;word-spacing:-1.2px;">-2 478</div>
<div class="t" style="top:507px;font-size:14px;color:#1b1b20;letter-spacing:0.7px;left:623.5px;width:600px;text-align:right;margin-left:0.7px;word-spacing:-1.2px;">781</div>
<div class="t" style="top:507px;font-size:14px;color:#1b1b20;letter-spacing:0.7px;left:714.25px;width:600px;text-align:right;margin-left:0.7px;word-spacing:-1.2px;">2 900</div>
<div class="t" style="top:507px;font-size:14px;color:#1b1b20;letter-spacing:0.7px;left:798.3499999999999px;width:600px;text-align:right;margin-left:0.7px;word-spacing:-1.2px;">-2 367</div>
<div class="t" style="top:507px;font-size:14px;color:#1b1b20;letter-spacing:0.7px;left:883.75px;width:600px;text-align:right;margin-left:0.7px;word-spacing:-1.2px;">1 314</div>
<div class="b" style="left:253px;top:553px;width:1241px;height:1px;background:#a1a5aa;"></div>
<div class="t" style="top:539px;font-size:13.7px;color:#1b1b20;letter-spacing:0.1px;left:270.3px;">Saving for a rainy day</div>
<div class="t" style="top:538px;font-size:14px;color:#1b1b20;letter-spacing:0.7px;left:-66.5px;width:600px;text-align:right;margin-left:0.7px;word-spacing:-1.2px;">2 175</div>
<div class="t" style="top:538px;font-size:14px;color:#a6aaae;letter-spacing:0.7px;left:17.600000000000023px;width:600px;text-align:right;margin-left:0.7px;word-spacing:-1.2px;">0</div>
<div class="t" style="top:538px;font-size:14px;color:#1b1b20;letter-spacing:0.7px;left:103.0px;width:600px;text-align:right;margin-left:0.7px;word-spacing:-1.2px;">2 175</div>
<div class="t" style="top:538px;font-size:14px;color:#1b1b20;letter-spacing:0.7px;left:193.75px;width:600px;text-align:right;margin-left:0.7px;word-spacing:-1.2px;">2 320</div>
<div class="t" style="top:538px;font-size:14px;color:#a6aaae;letter-spacing:0.7px;left:277.85px;width:600px;text-align:right;margin-left:0.7px;word-spacing:-1.2px;">0</div>
<div class="t" style="top:538px;font-size:14px;color:#1b1b20;letter-spacing:0.7px;left:363.25px;width:600px;text-align:right;margin-left:0.7px;word-spacing:-1.2px;">4 495</div>
<div class="t" style="top:538px;font-size:14px;color:#1b1b20;letter-spacing:0.7px;left:454.0px;width:600px;text-align:right;margin-left:0.7px;word-spacing:-1.2px;">820</div>
<div class="t" style="top:538px;font-size:14px;color:#a6aaae;letter-spacing:0.7px;left:538.0999999999999px;width:600px;text-align:right;margin-left:0.7px;word-spacing:-1.2px;">0</div>
<div class="t" style="top:538px;font-size:14px;color:#1b1b20;letter-spacing:0.7px;left:623.5px;width:600px;text-align:right;margin-left:0.7px;word-spacing:-1.2px;">5 315</div>
<div class="t" style="top:538px;font-size:14px;color:#1b1b20;letter-spacing:0.7px;left:714.25px;width:600px;text-align:right;margin-left:0.7px;word-spacing:-1.2px;">320</div>
<div class="t" style="top:538px;font-size:14px;color:#a6aaae;letter-spacing:0.7px;left:798.3499999999999px;width:600px;text-align:right;margin-left:0.7px;word-spacing:-1.2px;">0</div>
<div class="t" style="top:538px;font-size:14px;color:#1b1b20;letter-spacing:0.7px;left:883.75px;width:600px;text-align:right;margin-left:0.7px;word-spacing:-1.2px;">5 635</div>
<div class="b" style="left:253px;top:554px;width:1241px;height:30px;background:#abadb0;"></div>
<div class="b" style="left:253px;top:584px;width:1241px;height:1px;background:#a1a5aa;"></div>
<svg class="b" style="left:263px;top:566px" width="8" height="6" viewBox="0 0 8 6"><path d="M0 0.5 H8 L4 5.5 Z" fill="#1b1b20"/></svg>
<div class="t" style="top:570px;font-size:13px;color:#1b1b20;font-weight:700;left:276.5px;">Daily expenses</div>
<div class="t" style="top:569px;font-size:14px;color:#1b1b20;font-weight:700;letter-spacing:0.8px;left:-66.5px;width:600px;text-align:right;margin-left:0.8px;word-spacing:-1.2px;">14 130</div>
<div class="t" style="top:569px;font-size:14px;color:#1b1b20;font-weight:700;letter-spacing:0.8px;left:17.600000000000023px;width:600px;text-align:right;margin-left:0.8px;word-spacing:-1.2px;">-12 664</div>
<div class="t" style="top:569px;font-size:14px;color:#1b1b20;font-weight:700;letter-spacing:0.8px;left:103.0px;width:600px;text-align:right;margin-left:0.8px;word-spacing:-1.2px;">1 466</div>
<div class="t" style="top:569px;font-size:14px;color:#1b1b20;font-weight:700;letter-spacing:0.8px;left:193.75px;width:600px;text-align:right;margin-left:0.8px;word-spacing:-1.2px;">11 550</div>
<div class="t" style="top:569px;font-size:14px;color:#1b1b20;font-weight:700;letter-spacing:0.8px;left:277.85px;width:600px;text-align:right;margin-left:0.8px;word-spacing:-1.2px;">-8 746</div>
<div class="t" style="top:569px;font-size:14px;color:#1b1b20;font-weight:700;letter-spacing:0.8px;left:363.25px;width:600px;text-align:right;margin-left:0.8px;word-spacing:-1.2px;">4 270</div>
<div class="t" style="top:569px;font-size:14px;color:#1b1b20;font-weight:700;letter-spacing:0.8px;left:454.0px;width:600px;text-align:right;margin-left:0.8px;word-spacing:-1.2px;">13 050</div>
<div class="t" style="top:569px;font-size:14px;color:#1b1b20;font-weight:700;letter-spacing:0.8px;left:538.0999999999999px;width:600px;text-align:right;margin-left:0.8px;word-spacing:-1.2px;">-9 989</div>
<div class="t" style="top:569px;font-size:14px;color:#1b1b20;font-weight:700;letter-spacing:0.8px;left:623.5px;width:600px;text-align:right;margin-left:0.8px;word-spacing:-1.2px;">7 331</div>
<div class="t" style="top:569px;font-size:14px;color:#1b1b20;font-weight:700;letter-spacing:0.8px;left:714.25px;width:600px;text-align:right;margin-left:0.8px;word-spacing:-1.2px;">13 550</div>
<div class="t" style="top:569px;font-size:14px;color:#1b1b20;font-weight:700;letter-spacing:0.8px;left:798.3499999999999px;width:600px;text-align:right;margin-left:0.8px;word-spacing:-1.2px;">-13 805</div>
<div class="t" style="top:569px;font-size:14px;color:#1b1b20;font-weight:700;letter-spacing:0.8px;left:883.75px;width:600px;text-align:right;margin-left:0.8px;word-spacing:-1.2px;">7 076</div>
<div class="b" style="left:253px;top:615px;width:1241px;height:1px;background:#a1a5aa;"></div>
<div class="t" style="top:601px;font-size:13.7px;color:#1b1b20;letter-spacing:0.1px;left:270.3px;">Groceries</div>
<div class="t" style="top:600px;font-size:14px;color:#1b1b20;letter-spacing:0.7px;left:-66.5px;width:600px;text-align:right;margin-left:0.7px;word-spacing:-1.2px;">7 000</div>
<div class="t" style="top:600px;font-size:14px;color:#1b1b20;letter-spacing:0.7px;left:17.600000000000023px;width:600px;text-align:right;margin-left:0.7px;word-spacing:-1.2px;">-6 234</div>
<div class="t" style="top:600px;font-size:14px;color:#1b1b20;letter-spacing:0.7px;left:103.0px;width:600px;text-align:right;margin-left:0.7px;word-spacing:-1.2px;">766</div>
<div class="t" style="top:600px;font-size:14px;color:#1b1b20;letter-spacing:0.7px;left:193.75px;width:600px;text-align:right;margin-left:0.7px;word-spacing:-1.2px;">7 500</div>
<div class="t" style="top:600px;font-size:14px;color:#1b1b20;letter-spacing:0.7px;left:277.85px;width:600px;text-align:right;margin-left:0.7px;word-spacing:-1.2px;">-7 824</div>
<div class="t" style="top:600px;font-size:14px;color:#1b1b20;letter-spacing:0.7px;left:363.25px;width:600px;text-align:right;margin-left:0.7px;word-spacing:-1.2px;">442</div>
<div class="t" style="top:600px;font-size:14px;color:#1b1b20;letter-spacing:0.7px;left:454.0px;width:600px;text-align:right;margin-left:0.7px;word-spacing:-1.2px;">7 500</div>
<div class="t" style="top:600px;font-size:14px;color:#1b1b20;letter-spacing:0.7px;left:538.0999999999999px;width:600px;text-align:right;margin-left:0.7px;word-spacing:-1.2px;">-5 989</div>
<div class="t" style="top:600px;font-size:14px;color:#1b1b20;letter-spacing:0.7px;left:623.5px;width:600px;text-align:right;margin-left:0.7px;word-spacing:-1.2px;">1 953</div>
<div class="t" style="top:600px;font-size:14px;color:#1b1b20;letter-spacing:0.7px;left:714.25px;width:600px;text-align:right;margin-left:0.7px;word-spacing:-1.2px;">7 500</div>
<div class="t" style="top:600px;font-size:14px;color:#1b1b20;letter-spacing:0.7px;left:798.3499999999999px;width:600px;text-align:right;margin-left:0.7px;word-spacing:-1.2px;">-6 468</div>
<div class="t" style="top:600px;font-size:14px;color:#1b1b20;letter-spacing:0.7px;left:883.75px;width:600px;text-align:right;margin-left:0.7px;word-spacing:-1.2px;">2 985</div>
<div class="b" style="left:253px;top:646px;width:1241px;height:1px;background:#a1a5aa;"></div>
<div class="t" style="top:632px;font-size:13.7px;color:#1b1b20;letter-spacing:0.1px;left:270.3px;">Fuel</div>
<div class="t" style="top:631px;font-size:14px;color:#1b1b20;letter-spacing:0.7px;left:-66.5px;width:600px;text-align:right;margin-left:0.7px;word-spacing:-1.2px;">1 500</div>
<div class="t" style="top:631px;font-size:14px;color:#1b1b20;letter-spacing:0.7px;left:17.600000000000023px;width:600px;text-align:right;margin-left:0.7px;word-spacing:-1.2px;">-1 353</div>
<div class="t" style="top:631px;font-size:14px;color:#1b1b20;letter-spacing:0.7px;left:103.0px;width:600px;text-align:right;margin-left:0.7px;word-spacing:-1.2px;">147</div>
<div class="t" style="top:631px;font-size:14px;color:#1b1b20;letter-spacing:0.7px;left:193.75px;width:600px;text-align:right;margin-left:0.7px;word-spacing:-1.2px;">1 500</div>
<div class="t" style="top:631px;font-size:14px;color:#1b1b20;letter-spacing:0.7px;left:277.85px;width:600px;text-align:right;margin-left:0.7px;word-spacing:-1.2px;">-368</div>
<div class="t" style="top:631px;font-size:14px;color:#1b1b20;letter-spacing:0.7px;left:363.25px;width:600px;text-align:right;margin-left:0.7px;word-spacing:-1.2px;">1 279</div>
<div class="t" style="top:631px;font-size:14px;color:#1b1b20;letter-spacing:0.7px;left:454.0px;width:600px;text-align:right;margin-left:0.7px;word-spacing:-1.2px;">1 500</div>
<div class="t" style="top:631px;font-size:14px;color:#1b1b20;letter-spacing:0.7px;left:538.0999999999999px;width:600px;text-align:right;margin-left:0.7px;word-spacing:-1.2px;">-1 563</div>
<div class="t" style="top:631px;font-size:14px;color:#1b1b20;letter-spacing:0.7px;left:623.5px;width:600px;text-align:right;margin-left:0.7px;word-spacing:-1.2px;">1 216</div>
<div class="t" style="top:631px;font-size:14px;color:#1b1b20;letter-spacing:0.7px;left:714.25px;width:600px;text-align:right;margin-left:0.7px;word-spacing:-1.2px;">1 500</div>
<div class="t" style="top:631px;font-size:14px;color:#1b1b20;letter-spacing:0.7px;left:798.3499999999999px;width:600px;text-align:right;margin-left:0.7px;word-spacing:-1.2px;">-976</div>
<div class="t" style="top:631px;font-size:14px;color:#1b1b20;letter-spacing:0.7px;left:883.75px;width:600px;text-align:right;margin-left:0.7px;word-spacing:-1.2px;">1 740</div>
<div class="b" style="left:253px;top:677px;width:1241px;height:1px;background:#a1a5aa;"></div>
<div class="t" style="top:663px;font-size:13.7px;color:#1b1b20;letter-spacing:0.1px;left:270.3px;">Eating out</div>
<div class="t" style="top:662px;font-size:14px;color:#1b1b20;letter-spacing:0.7px;left:-66.5px;width:600px;text-align:right;margin-left:0.7px;word-spacing:-1.2px;">600</div>
<div class="t" style="top:662px;font-size:14px;color:#1b1b20;letter-spacing:0.7px;left:17.600000000000023px;width:600px;text-align:right;margin-left:0.7px;word-spacing:-1.2px;">-534</div>
<div class="t" style="top:662px;font-size:14px;color:#1b1b20;letter-spacing:0.7px;left:103.0px;width:600px;text-align:right;margin-left:0.7px;word-spacing:-1.2px;">66</div>
<div class="t" style="top:662px;font-size:14px;color:#1b1b20;letter-spacing:0.7px;left:193.75px;width:600px;text-align:right;margin-left:0.7px;word-spacing:-1.2px;">600</div>
<div class="t" style="top:662px;font-size:14px;color:#1b1b20;letter-spacing:0.7px;left:277.85px;width:600px;text-align:right;margin-left:0.7px;word-spacing:-1.2px;">-425</div>
<div class="t" style="top:662px;font-size:14px;color:#1b1b20;letter-spacing:0.7px;left:363.25px;width:600px;text-align:right;margin-left:0.7px;word-spacing:-1.2px;">241</div>
<div class="t" style="top:662px;font-size:14px;color:#1b1b20;letter-spacing:0.7px;left:454.0px;width:600px;text-align:right;margin-left:0.7px;word-spacing:-1.2px;">2 000</div>
<div class="t" style="top:662px;font-size:14px;color:#1b1b20;letter-spacing:0.7px;left:538.0999999999999px;width:600px;text-align:right;margin-left:0.7px;word-spacing:-1.2px;">-1 573</div>
<div class="t" style="top:662px;font-size:14px;color:#1b1b20;letter-spacing:0.7px;left:623.5px;width:600px;text-align:right;margin-left:0.7px;word-spacing:-1.2px;">668</div>
<div class="t" style="top:662px;font-size:14px;color:#1b1b20;letter-spacing:0.7px;left:714.25px;width:600px;text-align:right;margin-left:0.7px;word-spacing:-1.2px;">500</div>
<div class="t" style="top:662px;font-size:14px;color:#1b1b20;letter-spacing:0.7px;left:798.3499999999999px;width:600px;text-align:right;margin-left:0.7px;word-spacing:-1.2px;">-865</div>
<div class="t" style="top:662px;font-size:14px;color:#1b1b20;letter-spacing:0.7px;left:883.75px;width:600px;text-align:right;margin-left:0.7px;word-spacing:-1.2px;">303</div>
<div class="b" style="left:253px;top:708px;width:1241px;height:1px;background:#a1a5aa;"></div>
<div class="t" style="top:694px;font-size:13.7px;color:#1b1b20;letter-spacing:0.1px;left:270.3px;">Clothing</div>
<div class="t" style="top:693px;font-size:14px;color:#1b1b20;letter-spacing:0.7px;left:-66.5px;width:600px;text-align:right;margin-left:0.7px;word-spacing:-1.2px;">3 000</div>
<div class="t" style="top:693px;font-size:14px;color:#1b1b20;letter-spacing:0.7px;left:17.600000000000023px;width:600px;text-align:right;margin-left:0.7px;word-spacing:-1.2px;">-2 588</div>
<div class="t" style="top:693px;font-size:14px;color:#1b1b20;letter-spacing:0.7px;left:103.0px;width:600px;text-align:right;margin-left:0.7px;word-spacing:-1.2px;">412</div>
<div class="t" style="top:693px;font-size:14px;color:#1b1b20;letter-spacing:0.7px;left:193.75px;width:600px;text-align:right;margin-left:0.7px;word-spacing:-1.2px;">500</div>
<div class="t" style="top:693px;font-size:14px;color:#a6aaae;letter-spacing:0.7px;left:277.85px;width:600px;text-align:right;margin-left:0.7px;word-spacing:-1.2px;">0</div>
<div class="t" style="top:693px;font-size:14px;color:#1b1b20;letter-spacing:0.7px;left:363.25px;width:600px;text-align:right;margin-left:0.7px;word-spacing:-1.2px;">912</div>
<div class="t" style="top:693px;font-size:14px;color:#1b1b20;letter-spacing:0.7px;left:454.0px;width:600px;text-align:right;margin-left:0.7px;word-spacing:-1.2px;">500</div>
<div class="t" style="top:693px;font-size:14px;color:#a6aaae;letter-spacing:0.7px;left:538.0999999999999px;width:600px;text-align:right;margin-left:0.7px;word-spacing:-1.2px;">0</div>
<div class="t" style="top:693px;font-size:14px;color:#1b1b20;letter-spacing:0.7px;left:623.5px;width:600px;text-align:right;margin-left:0.7px;word-spacing:-1.2px;">1 412</div>
<div class="t" style="top:693px;font-size:14px;color:#1b1b20;letter-spacing:0.7px;left:714.25px;width:600px;text-align:right;margin-left:0.7px;word-spacing:-1.2px;">500</div>
<div class="t" style="top:693px;font-size:14px;color:#1b1b20;letter-spacing:0.7px;left:798.3499999999999px;width:600px;text-align:right;margin-left:0.7px;word-spacing:-1.2px;">-856</div>
<div class="t" style="top:693px;font-size:14px;color:#1b1b20;letter-spacing:0.7px;left:883.75px;width:600px;text-align:right;margin-left:0.7px;word-spacing:-1.2px;">1 056</div>
<div class="b" style="left:253px;top:739px;width:1241px;height:1px;background:#a1a5aa;"></div>
<div class="t" style="top:725px;font-size:13.7px;color:#1b1b20;letter-spacing:0.1px;left:270.3px;">Entertainment</div>
<div class="t" style="top:724px;font-size:14px;color:#1b1b20;letter-spacing:0.7px;left:-66.5px;width:600px;text-align:right;margin-left:0.7px;word-spacing:-1.2px;">300</div>
<div class="t" style="top:724px;font-size:14px;color:#1b1b20;letter-spacing:0.7px;left:17.600000000000023px;width:600px;text-align:right;margin-left:0.7px;word-spacing:-1.2px;">-248</div>
<div class="t" style="top:724px;font-size:14px;color:#1b1b20;letter-spacing:0.7px;left:103.0px;width:600px;text-align:right;margin-left:0.7px;word-spacing:-1.2px;">52</div>
<div class="t" style="top:724px;font-size:14px;color:#1b1b20;letter-spacing:0.7px;left:193.75px;width:600px;text-align:right;margin-left:0.7px;word-spacing:-1.2px;">300</div>
<div class="t" style="top:724px;font-size:14px;color:#a6aaae;letter-spacing:0.7px;left:277.85px;width:600px;text-align:right;margin-left:0.7px;word-spacing:-1.2px;">0</div>
<div class="t" style="top:724px;font-size:14px;color:#1b1b20;letter-spacing:0.7px;left:363.25px;width:600px;text-align:right;margin-left:0.7px;word-spacing:-1.2px;">352</div>
<div class="t" style="top:724px;font-size:14px;color:#1b1b20;letter-spacing:0.7px;left:454.0px;width:600px;text-align:right;margin-left:0.7px;word-spacing:-1.2px;">400</div>
<div class="t" style="top:724px;font-size:14px;color:#1b1b20;letter-spacing:0.7px;left:538.0999999999999px;width:600px;text-align:right;margin-left:0.7px;word-spacing:-1.2px;">-390</div>
<div class="t" style="top:724px;font-size:14px;color:#1b1b20;letter-spacing:0.7px;left:623.5px;width:600px;text-align:right;margin-left:0.7px;word-spacing:-1.2px;">362</div>
<div class="t" style="top:724px;font-size:14px;color:#1b1b20;letter-spacing:0.7px;left:714.25px;width:600px;text-align:right;margin-left:0.7px;word-spacing:-1.2px;">400</div>
<div class="t" style="top:724px;font-size:14px;color:#1b1b20;letter-spacing:0.7px;left:798.3499999999999px;width:600px;text-align:right;margin-left:0.7px;word-spacing:-1.2px;">-187</div>
<div class="t" style="top:724px;font-size:14px;color:#1b1b20;letter-spacing:0.7px;left:883.75px;width:600px;text-align:right;margin-left:0.7px;word-spacing:-1.2px;">575</div>
<div class="b" style="left:253px;top:770px;width:1241px;height:1px;background:#a1a5aa;"></div>
<div class="t" style="top:756px;font-size:13.7px;color:#1b1b20;letter-spacing:0.1px;left:270.3px;">Streaming services</div>
<div class="t" style="top:755px;font-size:14px;color:#1b1b20;letter-spacing:0.7px;left:-66.5px;width:600px;text-align:right;margin-left:0.7px;word-spacing:-1.2px;">130</div>
<div class="t" style="top:755px;font-size:14px;color:#1b1b20;letter-spacing:0.7px;left:17.600000000000023px;width:600px;text-align:right;margin-left:0.7px;word-spacing:-1.2px;">-129</div>
<div class="t" style="top:755px;font-size:14px;color:#1b1b20;letter-spacing:0.7px;left:103.0px;width:600px;text-align:right;margin-left:0.7px;word-spacing:-1.2px;">1</div>
<div class="t" style="top:755px;font-size:14px;color:#1b1b20;letter-spacing:0.7px;left:193.75px;width:600px;text-align:right;margin-left:0.7px;word-spacing:-1.2px;">150</div>
<div class="t" style="top:755px;font-size:14px;color:#1b1b20;letter-spacing:0.7px;left:277.85px;width:600px;text-align:right;margin-left:0.7px;word-spacing:-1.2px;">-129</div>
<div class="t" style="top:755px;font-size:14px;color:#1b1b20;letter-spacing:0.7px;left:363.25px;width:600px;text-align:right;margin-left:0.7px;word-spacing:-1.2px;">22</div>
<div class="t" style="top:755px;font-size:14px;color:#1b1b20;letter-spacing:0.7px;left:454.0px;width:600px;text-align:right;margin-left:0.7px;word-spacing:-1.2px;">150</div>
<div class="t" style="top:755px;font-size:14px;color:#1b1b20;letter-spacing:0.7px;left:538.0999999999999px;width:600px;text-align:right;margin-left:0.7px;word-spacing:-1.2px;">-129</div>
<div class="t" style="top:755px;font-size:14px;color:#1b1b20;letter-spacing:0.7px;left:623.5px;width:600px;text-align:right;margin-left:0.7px;word-spacing:-1.2px;">43</div>
<div class="t" style="top:755px;font-size:14px;color:#1b1b20;letter-spacing:0.7px;left:714.25px;width:600px;text-align:right;margin-left:0.7px;word-spacing:-1.2px;">150</div>
<div class="t" style="top:755px;font-size:14px;color:#1b1b20;letter-spacing:0.7px;left:798.3499999999999px;width:600px;text-align:right;margin-left:0.7px;word-spacing:-1.2px;">-129</div>
<div class="t" style="top:755px;font-size:14px;color:#1b1b20;letter-spacing:0.7px;left:883.75px;width:600px;text-align:right;margin-left:0.7px;word-spacing:-1.2px;">64</div>
<div class="b" style="left:253px;top:801px;width:1241px;height:1px;background:#a1a5aa;"></div>
<div class="t" style="top:787px;font-size:13.7px;color:#1b1b20;letter-spacing:0.1px;left:270.3px;">Hobbies</div>
<div class="t" style="top:786px;font-size:14px;color:#1b1b20;letter-spacing:0.7px;left:-66.5px;width:600px;text-align:right;margin-left:0.7px;word-spacing:-1.2px;">1 600</div>
<div class="t" style="top:786px;font-size:14px;color:#1b1b20;letter-spacing:0.7px;left:17.600000000000023px;width:600px;text-align:right;margin-left:0.7px;word-spacing:-1.2px;">-1 578</div>
<div class="t" style="top:786px;font-size:14px;color:#1b1b20;letter-spacing:0.7px;left:103.0px;width:600px;text-align:right;margin-left:0.7px;word-spacing:-1.2px;">22</div>
<div class="t" style="top:786px;font-size:14px;color:#1b1b20;letter-spacing:0.7px;left:193.75px;width:600px;text-align:right;margin-left:0.7px;word-spacing:-1.2px;">1 000</div>
<div class="t" style="top:786px;font-size:14px;color:#a6aaae;letter-spacing:0.7px;left:277.85px;width:600px;text-align:right;margin-left:0.7px;word-spacing:-1.2px;">0</div>
<div class="t" style="top:786px;font-size:14px;color:#1b1b20;letter-spacing:0.7px;left:363.25px;width:600px;text-align:right;margin-left:0.7px;word-spacing:-1.2px;">1 022</div>
<div class="t" style="top:786px;font-size:14px;color:#1b1b20;letter-spacing:0.7px;left:454.0px;width:600px;text-align:right;margin-left:0.7px;word-spacing:-1.2px;">1 000</div>
<div class="t" style="top:786px;font-size:14px;color:#1b1b20;letter-spacing:0.7px;left:538.0999999999999px;width:600px;text-align:right;margin-left:0.7px;word-spacing:-1.2px;">-345</div>
<div class="t" style="top:786px;font-size:14px;color:#1b1b20;letter-spacing:0.7px;left:623.5px;width:600px;text-align:right;margin-left:0.7px;word-spacing:-1.2px;">1 677</div>
<div class="t" style="top:786px;font-size:14px;color:#1b1b20;letter-spacing:0.7px;left:714.25px;width:600px;text-align:right;margin-left:0.7px;word-spacing:-1.2px;">3 000</div>
<div class="t" style="top:786px;font-size:14px;color:#1b1b20;letter-spacing:0.7px;left:798.3499999999999px;width:600px;text-align:right;margin-left:0.7px;word-spacing:-1.2px;">-4 324</div>
<div class="t" style="top:786px;font-size:14px;color:#1b1b20;letter-spacing:0.7px;left:883.75px;width:600px;text-align:right;margin-left:0.7px;word-spacing:-1.2px;">353</div>
<div class="t" style="top:334px;font-size:13.7px;color:#3e546c;left:-66.5px;width:600px;text-align:right;">Budgeted</div>
<div class="t" style="top:349px;font-size:14px;color:#354a60;font-weight:700;letter-spacing:0.8px;left:-66.5px;width:600px;text-align:right;margin-left:0.8px;word-spacing:-1.2px;">34 875</div>
<div class="t" style="top:334px;font-size:13.7px;color:#3e546c;left:17.600000000000023px;width:600px;text-align:right;">Spent</div>
<div class="t" style="top:349px;font-size:14px;color:#354a60;font-weight:700;letter-spacing:0.8px;left:17.600000000000023px;width:600px;text-align:right;margin-left:0.8px;word-spacing:-1.2px;">-31 081</div>
<div class="t" style="top:334px;font-size:13.7px;color:#3e546c;left:103.0px;width:600px;text-align:right;">Balance</div>
<div class="t" style="top:349px;font-size:14px;color:#354a60;font-weight:700;letter-spacing:0.8px;left:103.0px;width:600px;text-align:right;margin-left:0.8px;word-spacing:-1.2px;">3 794</div>
<div class="t" style="top:334px;font-size:13.7px;color:#3e546c;left:193.75px;width:600px;text-align:right;">Budgeted</div>
<div class="t" style="top:349px;font-size:14px;color:#354a60;font-weight:700;letter-spacing:0.8px;left:193.75px;width:600px;text-align:right;margin-left:0.8px;word-spacing:-1.2px;">32 000</div>
<div class="t" style="top:334px;font-size:13.7px;color:#3e546c;left:277.85px;width:600px;text-align:right;">Spent</div>
<div class="t" style="top:349px;font-size:14px;color:#354a60;font-weight:700;letter-spacing:0.8px;left:277.85px;width:600px;text-align:right;margin-left:0.8px;word-spacing:-1.2px;">-25 761</div>
<div class="t" style="top:334px;font-size:13.7px;color:#3e546c;left:363.25px;width:600px;text-align:right;">Balance</div>
<div class="t" style="top:349px;font-size:14px;color:#354a60;font-weight:700;letter-spacing:0.8px;left:363.25px;width:600px;text-align:right;margin-left:0.8px;word-spacing:-1.2px;">10 033</div>
<div class="t" style="top:334px;font-size:13.7px;color:#3e546c;left:454.0px;width:600px;text-align:right;">Budgeted</div>
<div class="t" style="top:349px;font-size:14px;color:#354a60;font-weight:700;letter-spacing:0.8px;left:454.0px;width:600px;text-align:right;margin-left:0.8px;word-spacing:-1.2px;">32 000</div>
<div class="t" style="top:334px;font-size:13.7px;color:#3e546c;left:538.0999999999999px;width:600px;text-align:right;">Spent</div>
<div class="t" style="top:349px;font-size:14px;color:#354a60;font-weight:700;letter-spacing:0.8px;left:538.0999999999999px;width:600px;text-align:right;margin-left:0.8px;word-spacing:-1.2px;">-28 081</div>
<div class="t" style="top:334px;font-size:13.7px;color:#3e546c;left:623.5px;width:600px;text-align:right;">Balance</div>
<div class="t" style="top:349px;font-size:14px;color:#354a60;font-weight:700;letter-spacing:0.8px;left:623.5px;width:600px;text-align:right;margin-left:0.8px;word-spacing:-1.2px;">13 952</div>
<div class="t" style="top:334px;font-size:13.7px;color:#3e546c;left:714.25px;width:600px;text-align:right;">Budgeted</div>
<div class="t" style="top:349px;font-size:14px;color:#354a60;font-weight:700;letter-spacing:0.8px;left:714.25px;width:600px;text-align:right;margin-left:0.8px;word-spacing:-1.2px;">32 000</div>
<div class="t" style="top:334px;font-size:13.7px;color:#3e546c;left:798.3499999999999px;width:600px;text-align:right;">Spent</div>
<div class="t" style="top:349px;font-size:14px;color:#354a60;font-weight:700;letter-spacing:0.8px;left:798.3499999999999px;width:600px;text-align:right;margin-left:0.8px;word-spacing:-1.2px;">-30 549</div>
<div class="t" style="top:334px;font-size:13.7px;color:#3e546c;left:883.75px;width:600px;text-align:right;">Balance</div>
<div class="t" style="top:349px;font-size:14px;color:#354a60;font-weight:700;letter-spacing:0.8px;left:883.75px;width:600px;text-align:right;margin-left:0.8px;word-spacing:-1.2px;">15 403</div>
<div class="b" style="left:453px;top:315px;width:1px;height:486px;background:#a1a5aa;"></div>
<div class="b" style="left:713px;top:315px;width:1px;height:486px;background:#a1a5aa;"></div>
<div class="b" style="left:974px;top:315px;width:1px;height:486px;background:#a1a5aa;"></div>
<div class="b" style="left:1234px;top:315px;width:1px;height:486px;background:#a1a5aa;"></div>
<div class="b" style="left:844px;top:748px;width:43px;height:17px;background:#ffffff;"></div>
<div class="t" style="top:755px;font-size:14px;color:#111;letter-spacing:0.9px;left:848px;">-129</div>
</div></body></html>
